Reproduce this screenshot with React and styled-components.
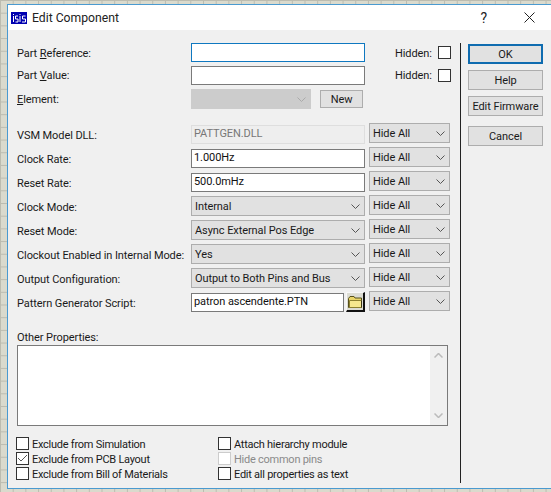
import React from 'react';
import styled, { createGlobalStyle } from 'styled-components';

const GlobalStyle = createGlobalStyle`
  html, body {
    margin: 0;
    padding: 0;
    width: 551px;
    height: 492px;
    overflow: hidden;
  }
  body {
    font-family: Roboto, "Liberation Sans", Arial, sans-serif;
    font-size: 11px;
    letter-spacing: -0.08px;
    color: #000;
  }
`;

const Desktop = styled.div`
  width: 551px;
  height: 492px;
  box-sizing: border-box;
  padding: 4px 0 0 7px;
  overflow: hidden;
  background-color: #dadacd;
  background-image:
    linear-gradient(to right, #bcbcb0 1px, transparent 1px),
    linear-gradient(to bottom, #bcbcb0 1px, transparent 1px);
  background-size: 12.7px 12.7px;
`;

const Window = styled.div`
  width: 560px;
  height: 485px;
  box-sizing: border-box;
  background: #f0f0f0;
  border: 1px solid #4a9ad0;
  border-right: none;
  display: flex;
  flex-direction: column;
`;

const TitleBar = styled.div`
  height: 25px;
  flex: none;
  background: #fff;
  display: flex;
  align-items: center;
  padding-left: 3px;
  width: 543px;
  box-sizing: border-box;
  font-size: 12.2px;
  letter-spacing: 0;
  color: #222;
`;

const TitleText = styled.span`
  margin-left: 5px;
`;

const TitleHelp = styled.span`
  margin-left: auto;
  font-size: 14px;
`;

const CloseIcon = styled.svg`
  margin: 0 16px 0 37px;
  width: 11px;
  height: 11px;
  stroke: #222;
  stroke-width: 1;
  fill: none;
`;

const Body = styled.div`
  flex: 1;
  display: flex;
  padding: 11px 0 5px 8px;
`;

const Left = styled.div`
  width: 434px;
  flex: none;
  display: flex;
  flex-direction: column;
`;

const Divider = styled.div`
  width: 1px;
  flex: none;
  background: #222;
  margin: 2px 0 0 10px;
`;

const Side = styled.div`
  width: 75px;
  margin-left: 7px;
  display: flex;
  flex-direction: column;
  padding-top: 3px;
`;

const FormRow = styled.div`
  display: flex;
  align-items: center;
  height: ${p => p.$h || 24}px;
  margin-bottom: ${p => p.$mb || 0}px;
`;

const Label = styled.div`
  width: 175px;
  flex: none;
  padding: ${p => (p.$drop ? 2 : 0)}px 0 0 1px;
  box-sizing: border-box;
  white-space: nowrap;
  color: #1a1a1a;
`;

const Mnemonic = styled.span`
  text-decoration: underline;
`;

const TextField = styled.div`
  width: ${p => p.$w || 174}px;
  height: 19px;
  flex: none;
  box-sizing: border-box;
  background: ${p => (p.$readOnly ? '#eeeeee' : '#fff')};
  border: 1px solid ${p => (p.$readOnly ? '#dedede' : p.$focus ? '#0f78c0' : '#7a7a7a')};
  padding-left: 2px;
  line-height: 16px;
  color: ${p => (p.$readOnly ? '#777' : '#111')};
  white-space: nowrap;
  overflow: hidden;
`;

const Select = styled.div`
  width: ${p => p.$w || 174}px;
  height: 20px;
  flex: none;
  box-sizing: border-box;
  margin: 0 0 ${p => (p.$lift ? 2 : 0)}px ${p => p.$ml || 0}px;
  background: ${p => (p.$disabled ? '#cccccc' : '#e1e1e1')};
  border: 1px solid ${p => (p.$disabled ? '#cccccc' : '#adadad')};
  display: flex;
  align-items: center;
  justify-content: space-between;
  padding: 0 4px 0 3px;
  white-space: nowrap;
  color: #1a1a1a;
`;

const Chevron = styled.svg`
  width: 9px;
  height: 5px;
  flex: none;
  fill: none;
  stroke: ${p => p.$color || '#555'};
  stroke-width: 1;
`;

const HiddenLabel = styled.span`
  margin-left: 30px;
  padding-top: ${p => (p.$drop ? 2 : 0)}px;
  width: 43px;
  flex: none;
  color: #1a1a1a;
`;

const CheckBox = styled.span`
  width: 13px;
  height: 13px;
  flex: none;
  box-sizing: border-box;
  background: #fff;
  border: 1px solid ${p => (p.$disabled ? '#cccccc' : '#333')};
  display: inline-flex;
  align-items: center;
  justify-content: center;
`;

const SmallButton = styled.div`
  width: 43px;
  height: 18px;
  box-sizing: border-box;
  margin-left: 9px;
  background: #e1e1e1;
  border: 1px solid #adadad;
  display: flex;
  align-items: center;
  justify-content: center;
  color: #1a1a1a;
`;

const FolderButton = styled.div`
  width: 19px;
  height: 20px;
  margin-left: 2px;
  flex: none;
  box-sizing: border-box;
  background: #dcdcd4;
  border-style: solid;
  border-width: 1px 2px 2px 1px;
  border-color: #f8f8f8 #111 #111 #f8f8f8;
  display: flex;
  align-items: center;
  justify-content: center;
`;

const OtherLabel = styled.div`
  margin-top: 16px;
  padding-left: 1px;
  height: 15px;
  line-height: 15px;
  color: #1a1a1a;
`;

const TextArea = styled.div`
  width: 431px;
  height: 81px;
  margin-left: 1px;
  box-sizing: border-box;
  background: #fff;
  border: 1px solid #7a7a7a;
  display: flex;
  justify-content: flex-end;
`;

const ScrollBar = styled.div`
  width: 17px;
  background: #f0f0f0;
  display: flex;
  flex-direction: column;
  justify-content: space-between;
  align-items: center;
  padding: 7px 0;
`;

const OptionColumns = styled.div`
  display: flex;
  margin-top: 10px;
`;

const OptionColumn = styled.div`
  width: ${p => p.$w}px;
  display: flex;
  flex-direction: column;
`;

const Option = styled.div`
  height: 15px;
  display: flex;
  align-items: center;
  gap: 3px;
  white-space: nowrap;
  letter-spacing: -0.25px;
  color: ${p => (p.$disabled ? '#8a8a8a' : '#1a1a1a')};
`;

const OptionText = styled.span`
  padding-top: 2px;
`;

const ActionButton = styled.div`
  height: 20px;
  box-sizing: border-box;
  margin-bottom: ${p => p.$mb || 6}px;
  background: #e1e1e1;
  border: ${p => (p.$primary ? '2px solid #0f6cb0' : '1px solid #adadad')};
  display: flex;
  align-items: center;
  justify-content: center;
  white-space: nowrap;
  color: #1a1a1a;
`;

const props = [
  { label: 'Clock Rate:', field: '1.000Hz' },
  { label: 'Reset Rate:', field: '500.0mHz' },
  { label: 'Clock Mode:', select: 'Internal' },
  { label: 'Reset Mode:', select: 'Async External Pos Edge' },
  { label: 'Clockout Enabled in Internal Mode:', select: 'Yes' },
  { label: 'Output Configuration:', select: 'Output to Both Pins and Bus' },
];

const ChevronDown = ({ color }) => (
  <Chevron viewBox="0 0 9 5" $color={color}>
    <path d="M0.5 0.5 L4.5 4.5 L8.5 0.5" />
  </Chevron>
);

const HideAll = () => (
  <Select $w={81} $ml={4} $lift>
    Hide All
    <ChevronDown />
  </Select>
);

const App = () => (
  <>
    <GlobalStyle />
    <Desktop>
      <Window>
        <TitleBar>
          <svg width="16" height="12" viewBox="0 0 16 12">
            <rect width="16" height="12" fill="#0000b0" />
            <path d="M2.500 2v1M2.500 4v6M4.500 10h2.500v-3h-2.500v-3h2.500M9 2v1M9 4v6M11 10h3.500v-3h-3v-3h3" stroke="#fff" fill="none" />
          </svg>
          <TitleText>Edit Component</TitleText>
          <TitleHelp>?</TitleHelp>
          <CloseIcon viewBox="0 0 11 11">
            <path d="M0.5 0.5 L10.5 10.5 M10.5 0.5 L0.5 10.5" />
          </CloseIcon>
        </TitleBar>
        <Body>
          <Left>
            <FormRow $h={23}>
              <Label $drop>Part <Mnemonic>R</Mnemonic>eference:</Label>
              <TextField $focus />
              <HiddenLabel $drop>Hidden:</HiddenLabel>
              <CheckBox />
            </FormRow>
            <FormRow $h={23}>
              <Label>Part <Mnemonic>V</Mnemonic>alue:</Label>
              <TextField />
              <HiddenLabel>Hidden:</HiddenLabel>
              <CheckBox />
            </FormRow>
            <FormRow $h={24} $mb={11}>
              <Label><Mnemonic>E</Mnemonic>lement:</Label>
              <Select $w={120} $disabled>
                <span />
                <ChevronDown color="#aaa" />
              </Select>
              <SmallButton>New</SmallButton>
            </FormRow>
            <FormRow>
              <Label $drop>VSM Model DLL:</Label>
              <TextField $readOnly>PATTGEN.DLL</TextField>
              <HideAll />
            </FormRow>
            {props.map(p => (
              <FormRow key={p.label}>
                <Label $drop>{p.label}</Label>
                {p.field ? (
                  <TextField>{p.field}</TextField>
                ) : (
                  <Select>
                    {p.select}
                    <ChevronDown />
                  </Select>
                )}
                <HideAll />
              </FormRow>
            ))}
            <FormRow>
              <Label $drop>Pattern Generator Script:</Label>
              <TextField $w={153}>patron ascendente.PTN</TextField>
              <FolderButton>
                <svg width="15" height="14" viewBox="0 0 15 14">
                  <path d="M0.500 3.500 L2 1.500 H6 L7 3 H13.500 V12.500 H0.500 Z" fill="#e9d468" stroke="#57501c" />
                  <path d="M1.500 5.500 H13.500 V12.500 H1.500 Z" fill="#f7e88e" stroke="#8d8130" />
                  <path d="M13.500 5.500 V12.500" stroke="#3c3714" />
                </svg>
              </FolderButton>
              <HideAll />
            </FormRow>
            <OtherLabel>Other Properties:</OtherLabel>
            <TextArea>
              <ScrollBar>
                <svg width="9" height="5" viewBox="0 0 9 5">
                  <path d="M0.5 4.5 L4.500 0.500 L8.500 4.500" fill="none" stroke="#bbb" strokeWidth="1.5" />
                </svg>
                <svg width="9" height="5" viewBox="0 0 9 5">
                  <path d="M0.5 0.5 L4.500 4.500 L8.500 0.500" fill="none" stroke="#bbb" strokeWidth="1.5" />
                </svg>
              </ScrollBar>
            </TextArea>
            <OptionColumns>
              <OptionColumn $w={202}>
                <Option><CheckBox /><OptionText>Exclude from Simulation</OptionText></Option>
                <Option>
                  <CheckBox>
                    <svg width="11" height="9" viewBox="0 0 11 9">
                      <path d="M1 4 L4 7 L10 1" fill="none" stroke="#555" />
                    </svg>
                  </CheckBox>
                  <OptionText>Exclude from PCB Layout</OptionText>
                </Option>
                <Option><CheckBox /><OptionText>Exclude from Bill of Materials</OptionText></Option>
              </OptionColumn>
              <OptionColumn $w={220}>
                <Option><CheckBox /><OptionText>Attach hierarchy module</OptionText></Option>
                <Option $disabled><CheckBox $disabled /><OptionText>Hide common pins</OptionText></Option>
                <Option><CheckBox /><OptionText>Edit all properties as text</OptionText></Option>
              </OptionColumn>
            </OptionColumns>
          </Left>
          <Divider />
          <Side>
            <ActionButton $primary>OK</ActionButton>
            <ActionButton>Help</ActionButton>
            <ActionButton $mb={10}>Edit Firmware</ActionButton>
            <ActionButton>Cancel</ActionButton>
          </Side>
        </Body>
      </Window>
    </Desktop>
  </>
);

export default App;
